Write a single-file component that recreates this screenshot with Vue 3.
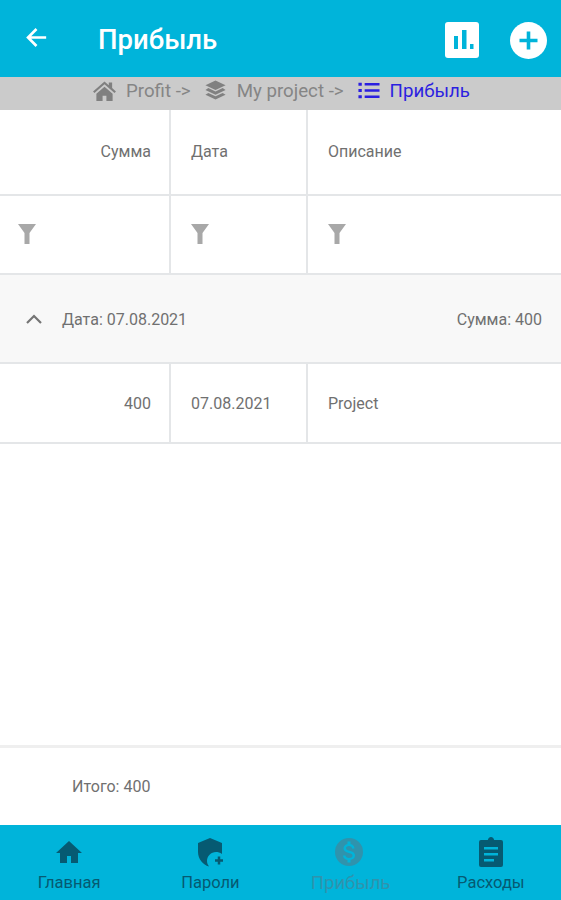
<script setup>
const headers = ['Сумма', 'Дата', 'Описание']
const row = ['400', '07.08.2021', 'Project']
const tabs = [
  { label: 'Главная', icon: 'home' },
  { label: 'Пароли', icon: 'shield' },
  { label: 'Прибыль', icon: 'money', off: true },
  { label: 'Расходы', icon: 'clip' }
]
</script>

<template>
  <div class="screen">
    <header class="topbar">
      <svg class="back" viewBox="0 0 24 24" width="29" height="29">
        <path d="M20 12H5M12 5l-7 7 7 7" fill="none" stroke="#fff" stroke-width="2.2" />
      </svg>
      <h1>Прибыль</h1>
      <svg class="chart" viewBox="0 0 34 36" width="34" height="36">
        <rect width="34" height="36" rx="3" fill="#fff" />
        <path d="M9 14h4v13H9zM17 8h4.500v19H17zM25 22h3.500v5H25z" fill="#00b4da" />
      </svg>
      <svg class="plus" viewBox="0 0 37 37" width="37" height="37">
        <circle cx="18.500" cy="18.500" r="18.500" fill="#fff" />
        <path d="M18.500 9.500v18M9.500 18.500h18" stroke="#00b4da" stroke-width="3.600" />
      </svg>
    </header>

    <nav class="crumbs">
      <svg viewBox="0 0 24 22" width="23" height="21"><path d="M12 1.500 0 12l1.500 1.700L12 4.500l10.500 9.200 1.500-1.700-4-3.500V2.500h-3.500v3zM3.500 14.500V22H10v-5.500h4V22h6.500v-7.500L12 7z" fill="#808080" /></svg>
      <span class="crumb">Profit -&gt;</span>
      <svg viewBox="0 0 24 24" width="23" height="23"><path d="M12 1.500 1.500 6.500 12 11.500l10.500-5zM4.500 9.500 1.500 11.500 12 16.500l10.500-5-3-2L12 13zM4.500 14.500l-3 2L12 21.500l10.500-5-3-2L12 18z" fill="#808080" /></svg>
      <span class="crumb">My project -&gt;</span>
      <svg viewBox="0 0 24 24" width="23" height="23"><path d="M1.500 4h3.500v3H1.500zM8 4.200h15.500v2.600H8zM1.500 10.500h3.500v3H1.500zM8 10.700h15.500v2.600H8zM1.500 17h3.500v3H1.500zM8 17.200h15.500v2.600H8z" fill="#2b1fe0" /></svg>
      <span class="crumb current">Прибыль</span>
    </nav>

    <div class="grid head">
      <div v-for="(h, i) in headers" :key="h" class="cell" :class="{ num: i === 0 }">{{ h }}</div>
    </div>
    <div class="grid filters">
      <div v-for="h in headers" :key="h" class="cell">
        <svg viewBox="0 0 18 20" width="18" height="20"><path d="M0 0h18l-6.500 9v11h-5V9z" fill="#a8a8a8" /></svg>
      </div>
    </div>

    <div class="group">
      <svg viewBox="0 0 18 12" width="18" height="12"><path d="M2 10l7-7 7 7" fill="none" stroke="#757575" stroke-width="2.2" /></svg>
      <span class="group-date">Дата: 07.08.2021</span>
      <span class="group-sum">Сумма: 400</span>
    </div>

    <div class="grid data">
      <div v-for="(v, i) in row" :key="v" class="cell" :class="{ num: i === 0 }">{{ v }}</div>
    </div>

    <div class="spacer"></div>

    <div class="total">Итого: 400</div>

    <footer class="tabs">
      <div v-for="t in tabs" :key="t.label" class="tab" :class="{ off: t.off }">
        <svg viewBox="0 0 30 30" width="30" height="30">
          <path v-if="t.icon === 'home'" d="M15 4 2 16h4v10h7v-7h4v7h7V16h4z" />
          <template v-else-if="t.icon === 'shield'">
            <path d="M15 1 3 6v9c0 7 5 13 11 14.500-1-1.500-2-3-2-5.500 0-5 4-9 9-9 2 0 4 .5 6 2V6z" />
            <path d="M20 23.500h8M24 19.500v8" stroke="currentColor" stroke-width="2.500" />
          </template>
          <path
            v-else-if="t.icon === 'money'"
            fill-rule="evenodd"
            d="M15 1a14 14 0 1 0 0 28 14 14 0 0 0 0-28zm1.500 22v2.500h-3V23c-2.500-.5-4.500-2-4.500-4.500h2.500c0 1.500 1.500 2.500 3.500 2.500s3.500-1 3.500-2.300c0-1.300-1-2-3.800-2.700-3.200-.8-5.200-2-5.200-4.700 0-2.200 1.800-3.800 4-4.300V4.500h3V7c2.500.5 4 2.400 4 4.500h-2.500c0-1.500-1-2.500-3-2.500s-3 1-3 2.200c0 1.100 1 1.800 3.500 2.500 3 .8 5.500 1.800 5.500 4.900 0 2.300-1.700 3.900-4.500 4.400z"
          />
          <path
            v-else
            fill-rule="evenodd"
            d="M15 0c1.500 0 2.700 1 3.200 3H25a2 2 0 0 1 2 2v23a2 2 0 0 1-2 2H5a2 2 0 0 1-2-2V5a2 2 0 0 1 2-2h6.800C12.300 1 13.500 0 15 0zM8 10v2.500h14V10zm0 6v2.500h14V16zm0 6v2.500h10V22z"
          />
        </svg>
        <span>{{ t.label }}</span>
      </div>
    </footer>
  </div>
</template>

<style scoped>
.screen {
  width: 561px;
  height: 900px;
  display: flex;
  flex-direction: column;
  background: #fff;
  font-family: Roboto, "Liberation Sans", sans-serif;
  overflow: hidden;
}

.topbar {
  height: 77px;
  flex: none;
  display: flex;
  align-items: center;
  padding: 0 14px 0 22px;
  background: #00b4da;
}

.topbar h1 {
  flex: 1;
  margin: 2px 0 0 47px;
  color: #fff;
  font-size: 27.500px;
  font-weight: 500;
}

.back {
  margin-top: -3px;
}

.chart {
  margin: 3px 31px 0 0;
}

.plus {
  margin-top: 3px;
}

.crumbs {
  height: 33px;
  flex: none;
  display: flex;
  align-items: center;
  justify-content: center;
  gap: 10px;
  padding: 0 0 6px 2px;
  box-sizing: border-box;
  background: #cbcbcb;
  color: #858585;
  font-size: 18.700px;
}

.crumb {
  margin-right: 3px;
}

.current {
  color: #2b1fe0;
  margin-right: 0;
}

.grid {
  display: grid;
  grid-template-columns: 171px 137px 1fr;
  flex: none;
  box-sizing: border-box;
  border-bottom: 2px solid #e4e6e8;
  color: #707070;
  font-size: 16px;
}

.cell {
  display: flex;
  align-items: center;
  padding: 0 18px 0 20px;
  border-right: 2px solid #e4e6e8;
}

.cell:first-child {
  padding-left: 18px;
}

.cell:last-child {
  border-right: 0;
}

.num {
  justify-content: flex-end;
}

.head {
  height: 86px;
}

.head .cell {
  padding-bottom: 2px;
}

.filters {
  height: 79px;
}

.filters svg {
  margin-bottom: 1px;
}

.data {
  height: 80px;
}

.group {
  height: 89px;
  flex: none;
  display: flex;
  align-items: center;
  padding: 0 19px 0 25px;
  box-sizing: border-box;
  background: #f8f8f8;
  border-bottom: 2px solid #e4e6e8;
  color: #707070;
  font-size: 16px;
}

.group-date {
  flex: 1;
  margin-left: 19px;
}

.group span {
  padding-top: 2px;
}

.spacer {
  flex: 1;
}

.total {
  height: 80px;
  flex: none;
  display: flex;
  align-items: center;
  padding-left: 72px;
  border-top: 3px solid #efefef;
  box-sizing: border-box;
  color: #707070;
  font-size: 16px;
}

.tabs {
  height: 75px;
  flex: none;
  display: grid;
  grid-template-columns: repeat(4, 1fr);
  background: #00b4da;
}

.tab {
  display: flex;
  flex-direction: column;
  align-items: center;
  padding-top: 12px;
  color: #065a72;
  font-size: 16.500px;
}

.tab svg {
  fill: currentColor;
  margin-bottom: 6px;
}

.tab span {
  line-height: 20px;
}

.tab:nth-child(1) {
  margin-left: -2px;
}

.tab.off {
  color: #2f93ad;
  font-size: 18.500px;
}

.tab.off svg {
  margin-left: -3px;
}
</style>
